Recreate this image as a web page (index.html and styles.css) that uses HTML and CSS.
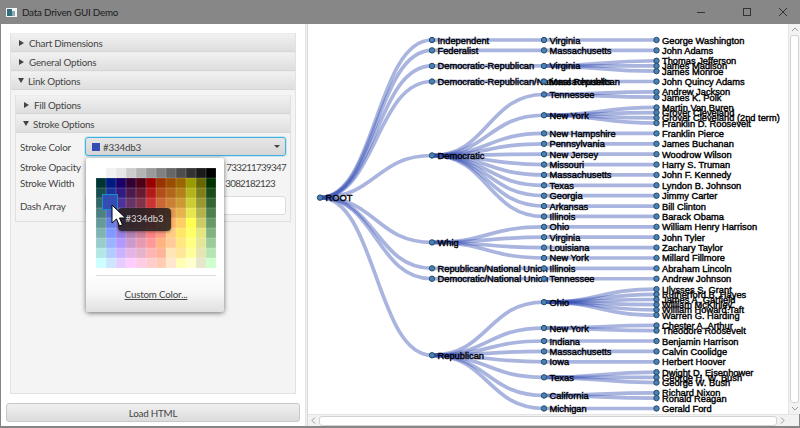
FILE: index.html
```html
<!DOCTYPE html>
<html lang="en">
<head>
  <meta charset="utf-8" />
  <title>Data Driven GUI Demo</title>
  <link rel="stylesheet" href="styles.css">
</head>
<body>
  <div class="window">
    <header class="titlebar">
      <svg class="app-icon" width="11" height="9" viewBox="0 0 11 9">
        <rect width="11" height="9" fill="#f4f4f4"/>
        <rect x="1" y="1" width="5" height="7" fill="#2f6f7d"/>
        <rect x="6" y="3" width="3" height="5" fill="#8fa9b0"/>
      </svg>
      <span class="title">Data Driven GUI Demo</span>
      <svg class="win-btn" width="46" height="24" viewBox="0 0 46 24"><path d="M18 12.500h8" stroke="#333" fill="none"/></svg>
      <svg class="win-btn" width="46" height="24" viewBox="0 0 46 24"><rect x="18.500" y="8.500" width="7" height="7" stroke="#333" fill="none"/></svg>
      <svg class="win-btn" width="29" height="24" viewBox="0 0 29 24"><path d="M8 8l8 8M16 8l-8 8" stroke="#333" fill="none"/></svg>
    </header>

    <div class="main">
      <section class="side">
        <div class="accordion">
          <div class="pane-head"><i class="arrow right"></i>Chart Dimensions</div>
          <div class="pane-head"><i class="arrow right"></i>General Options</div>
          <div class="pane-head"><i class="arrow down"></i>Link Options</div>
          <div class="pane-body">
            <div class="inner">
              <div class="pane-head"><i class="arrow right"></i>Fill Options</div>
              <div class="pane-head"><i class="arrow down"></i>Stroke Options</div>
              <div class="form">
                <div class="row row-combo">
                  <label>Stroke Color</label>
                  <div class="combo"><i class="swatch"></i>#334db3<i class="arrow down combo-arrow"></i></div>
                </div>
                <div class="row"><label>Stroke Opacity</label><span class="value">733211739347</span></div>
                <div class="row"><label>Stroke Width</label><span class="value value-short">3082182123</span></div>
                <div class="row row-input"><label>Dash Array</label><div class="field"></div></div>
              </div>
            </div>
          </div>
        </div>
        <button class="load">Load HTML</button>
      </section>

      <div class="divider"></div>

      <section class="chart">
        <div class="chart-top">
          <svg id="tree" class="tree" width="480" height="391" viewBox="308 24 480 391"></svg>
          <div class="vbar">
            <svg width="12" height="11" viewBox="0 0 12 11"><path d="M3 7l3-3 3 3" stroke="#999" fill="none"/></svg>
            <div class="vthumb"></div>
            <svg width="12" height="11" viewBox="0 0 12 11"><path d="M3 4l3 3 3-3" stroke="#999" fill="none"/></svg>
          </div>
        </div>
        <div class="hbar">
          <svg width="10" height="11" viewBox="0 0 10 11"><path d="M6 2.500l-3 3 3 3" stroke="#999" fill="none"/></svg>
          <div class="hthumb"></div>
          <svg width="10" height="11" viewBox="0 0 10 11"><path d="M4 2.500l3 3-3 3" stroke="#999" fill="none"/></svg>
          <div class="corner"></div>
        </div>
      </section>
    </div>
  </div>

  <!-- colour picker popup -->
  <div class="popup">
    <div id="palette" class="palette"></div>
    <div class="pop-sep"></div>
    <a class="custom">Custom Color...</a>
  </div>
  <div class="picked"></div>
  <div class="tip">#334db3</div>
  <svg class="cursor" width="15" height="24" viewBox="0 0 15 24">
    <path d="M1 1v18l4.500-4 3 7 3-1.300-3-6.700h6z" fill="#fff" stroke="#000" stroke-width="1"/>
  </svg>

  <script src="tree.js"></script>
</body>
</html>
```

FILE: styles.css
```css
* {
  box-sizing: border-box;
}

body {
  margin: 0;
  width: 800px;
  height: 428px;
  overflow: hidden;
  background: #fff;
  color: #444;
  font-family: Lato, sans-serif;
  font-size: 9.8px;
  letter-spacing: -0.2px;
}

.window {
  display: flex;
  flex-direction: column;
  height: 428px;
  border: solid #868686;
  border-width: 0 1px 2px 1px;
}

.titlebar {
  display: flex;
  align-items: center;
  flex: none;
  height: 24px;
  margin: 0 -1px;
  padding-left: 6px;
  background: #878787;
  color: #1c1c1c;
}
.app-icon {
  margin-right: 5px;
}
.title {
  flex: 1;
}

.main {
  display: flex;
  flex: 1;
  min-height: 0;
}

/* left column */
.side {
  display: flex;
  flex-direction: column;
  flex: none;
  width: 304px;
  padding: 9px 5px 4px 5px;
}
.accordion {
  display: flex;
  flex-direction: column;
  flex: 1;
  margin: 0 4px 9px 4px;
  border: 1px solid #e2e2e2;
  border-top: 0;
}
.pane-head {
  display: flex;
  align-items: center;
  flex: none;
  height: 19px;
  padding-left: 7px;
  background: linear-gradient(#f1f1f1, #dedede);
  border-bottom: 1px solid #d6d6d6;
  border-top: 1px solid #ececec;
}
.arrow {
  display: block;
  width: 0;
  height: 0;
}
.arrow.right {
  margin-left: 1px;
  margin-right: 5px;
  border-left: 5px solid #444;
  border-top: 3.500px solid transparent;
  border-bottom: 3.500px solid transparent;
}
.arrow.down {
  margin-right: 4px;
  border-top: 5px solid #444;
  border-left: 3.500px solid transparent;
  border-right: 3.500px solid transparent;
}
.pane-body {
  flex: 1;
  padding: 5px 4px;
  background: #f4f4f4;
}
.inner {
  border: 1px solid #dfdfdf;
  border-top: 0;
}

.form {
  display: flex;
  flex-direction: column;
  height: 88px;
  padding: 4px 4px 0 4px;
}
.row {
  display: flex;
  align-items: center;
  height: 16px;
}
.row label {
  flex: none;
  width: 65px;
  white-space: nowrap;
}
.row-combo {
  height: 19px;
  margin-bottom: 3px;
}
.row-input {
  height: 19px;
  margin-top: 5px;
}
.combo {
  display: flex;
  align-items: center;
  flex: 1;
  height: 19px;
  padding-left: 6px;
  background: linear-gradient(#e6e6e6, #d6d6d6);
  border: 1px solid #3fb2e0;
  border-radius: 3px;
  box-shadow: 0 0 0 1px rgba(120, 200, 235, 0.35);
}
.swatch {
  width: 8px;
  height: 8px;
  margin-right: 3px;
  background: #334db3;
}
.arrow.combo-arrow {
  margin-left: auto;
  margin-right: 5px;
  border-top-width: 3.500px;
  border-left-width: 3px;
  border-right-width: 3px;
}
.value {
  flex: 1;
  letter-spacing: -0.7px;
  text-align: right;
}
.value-short {
  padding-right: 11px;
}
.field {
  flex: 1;
  height: 19px;
  background: #fff;
  border: 1px solid #dcdcdc;
  border-radius: 3px;
}

.load {
  flex: none;
  height: 19px;
  padding: 0;
  color: #444;
  font: inherit;
  letter-spacing: inherit;
  background: linear-gradient(#f0f0f0, #dcdcdc);
  border: 1px solid #c8c8c8;
  border-radius: 3px;
}

.divider {
  flex: none;
  width: 3px;
  background: #f0f0f0;
  border-left: 1px solid #e2e2e2;
  border-right: 1px solid #d8d8d8;
}

/* chart */
.chart {
  display: flex;
  flex-direction: column;
  flex: 1;
  min-width: 0;
}
.chart-top {
  display: flex;
  flex: 1;
  min-height: 0;
}
.tree {
  display: block;
  flex: none;
}
.tree text {
  font-family: "Liberation Sans", sans-serif;
  font-size: 9.3px;
  letter-spacing: 0;
  fill: #000;
  stroke: #000;
  stroke-width: 0.4;
}
.tree .link {
  fill: none;
  stroke: #334db3;
  stroke-width: 3.7;
  stroke-opacity: 0.42;
}
.tree .node {
  fill: #4682b4;
  stroke: #27496b;
  stroke-width: 1;
}
.vbar {
  display: flex;
  flex-direction: column;
  flex: none;
  width: 12px;
  background: #f2f2f2;
  border-left: 1px solid #e4e4e4;
}
.vthumb {
  flex: 1;
  margin: 0 1px;
  background: #fff;
  border: 1px solid #d2d2d2;
  border-radius: 3px;
}
.hbar {
  display: flex;
  align-items: center;
  flex: none;
  height: 12px;
  padding-left: 1px;
  background: #f2f2f2;
  border-top: 1px solid #e4e4e4;
}
.hthumb {
  flex: 1;
  height: 10px;
  background: #fff;
  border: 1px solid #d2d2d2;
  border-radius: 3px;
}
.corner {
  flex: none;
  width: 12px;
}

/* things lying over the form */
.popup {
  position: absolute;
  left: 86px;
  top: 158px;
  display: flex;
  flex-direction: column;
  width: 138px;
  height: 154px;
  padding: 10px 8px 0 10px;
  background: linear-gradient(#fff 75%, #f6f6f6 88%, #e0e0e0);
  border-radius: 3px;
  box-shadow: 0 1px 5px rgba(0, 0, 0, 0.55);
}
.palette {
  display: grid;
  grid-template-columns: repeat(12, 10px);
  grid-auto-rows: 10px;
}
.palette i {
  display: block;
  box-shadow: inset 0 0 0 0.5px rgba(255, 255, 255, 0.2);
}
.pop-sep {
  height: 1px;
  margin-top: 7px;
  background: #dcdcdc;
}
.custom {
  margin-top: 12px;
  color: #444;
  text-align: center;
  text-decoration: underline;
}
.picked {
  position: absolute;
  left: 102px;
  top: 194px;
  width: 16px;
  height: 16px;
  background: #334db3;
  border: 1.500px solid #1590c8;
}
.tip {
  position: absolute;
  left: 118px;
  top: 208px;
  width: 53px;
  height: 23px;
  padding-top: 5px;
  color: #ddd;
  font-size: 9.5px;
  letter-spacing: 0;
  text-align: center;
  background: rgba(38, 30, 30, 0.88);
  border-radius: 4px;
  box-shadow: 0 1px 3px rgba(0, 0, 0, 0.4);
}
.cursor {
  position: absolute;
  left: 111px;
  top: 204px;
}
```

FILE: tree.js
```js
const SVG_NS = "http://www.w3.org/2000/svg";

// party > state > presidents
const data = [
  ["Independent", [["Virginia", ["George Washington"]]]],
  ["Federalist", [["Massachusetts", ["John Adams"]]]],
  ["Democratic-Republican", [["Virginia", ["Thomas Jefferson", "James Madison", "James Monroe"]]]],
  ["Democratic-Republican/National Republican", [["Massachusetts", ["John Quincy Adams"]]]],
  ["Democratic", [
    ["Tennessee", ["Andrew Jackson", "James K. Polk"]],
    ["New York", ["Martin Van Buren", "Grover Cleveland", "Grover Cleveland (2nd term)", "Franklin D. Roosevelt"]],
    ["New Hampshire", ["Franklin Pierce"]],
    ["Pennsylvania", ["James Buchanan"]],
    ["New Jersey", ["Woodrow Wilson"]],
    ["Missouri", ["Harry S. Truman"]],
    ["Massachusetts", ["John F. Kennedy"]],
    ["Texas", ["Lyndon B. Johnson"]],
    ["Georgia", ["Jimmy Carter"]],
    ["Arkansas", ["Bill Clinton"]],
    ["Illinois", ["Barack Obama"]]
  ]],
  ["Whig", [
    ["Ohio", ["William Henry Harrison"]],
    ["Virginia", ["John Tyler"]],
    ["Louisiana", ["Zachary Taylor"]],
    ["New York", ["Millard Fillmore"]]
  ]],
  ["Republican/National Union", [["Illinois", ["Abraham Lincoln"]]]],
  ["Democratic/National Union", [["Tennessee", ["Andrew Johnson"]]]],
  ["Republican", [
    ["Ohio", ["Ulysses S. Grant", "Rutherford B. Hayes", "James A. Garfield", "William McKinley", "William Howard Taft", "Warren G. Harding"]],
    ["New York", ["Chester A. Arthur", "Theodore Roosevelt"]],
    ["Indiana", ["Benjamin Harrison"]],
    ["Massachusetts", ["Calvin Coolidge"]],
    ["Iowa", ["Herbert Hoover"]],
    ["Texas", ["Dwight D. Eisenhower", "George H. W. Bush", "George W. Bush"]],
    ["California", ["Richard Nixon", "Ronald Reagan"]],
    ["Michigan", ["Gerald Ford"]]
  ]]
];

const TOP = 40, STEP = 5.19;
const COLS = [320, 432, 544, 656.5];

// Leaves first, a parent sits halfway between its first and last child
let cursor = TOP - 2 * STEP;
const nodes = [], links = [];

function place(name, kids, depth) {
  const node = { name, x: COLS[depth] };
  if (depth === 3) {
    return node;
  }
  const children = kids.map(k => {
    if (depth === 2) {
      const leaf = place(k, null, 3);
      cursor += STEP;
      leaf.y = cursor;
      return leaf;
    }
    if (depth === 1) {
      cursor += STEP; // extra space between states
    }
    return place(k[0], k[1], depth + 1);
  });
  node.y = (children[0].y + children[children.length - 1].y) / 2;
  children.forEach(c => links.push([node, c]));
  node.kids = children;
  return node;
}

const root = place("ROOT", data, 0);

function collect(n) {
  nodes.push(n);
  (n.kids || []).forEach(collect);
}
collect(root);

const svg = document.getElementById("tree");

function add(tag, attrs, text) {
  const el = document.createElementNS(SVG_NS, tag);
  Object.keys(attrs).forEach(k => el.setAttribute(k, attrs[k]));
  if (text) el.textContent = text;
  svg.appendChild(el);
}

links.forEach(([s, t]) => {
  const m = (s.x + t.x) / 2;
  add("path", { class: "link", d: `M${s.x},${s.y}C${m},${s.y} ${m},${t.y} ${t.x},${t.y}` });
});
nodes.forEach(n => {
  add("circle", { class: "node", cx: n.x, cy: n.y, r: 2.7 });
  add("text", { x: n.x + 5.5, y: n.y + 3.5 }, n.name);
});

// JavaFX colour palette, one row per line
const palette = [
  "255,255,255 242,242,242 230,230,230 204,204,204 179,179,179 153,153,153 128,128,128 102,102,102 77,77,77 51,51,51 26,26,26 0,0,0",
  "0,51,51 0,26,128 26,0,104 51,0,51 77,0,26 153,0,0 153,51,0 153,77,0 153,102,0 153,153,0 102,102,0 0,51,0",
  "26,77,77 26,51,153 51,26,128 77,26,77 102,26,51 179,26,26 179,77,26 179,102,26 179,128,26 179,179,26 128,128,26 26,77,26",
  "51,102,102 51,77,179 77,51,153 102,51,102 128,51,77 204,51,51 204,102,51 204,128,51 204,153,51 204,204,51 153,153,51 51,102,51",
  "77,128,128 77,102,204 102,77,179 128,77,128 153,77,102 230,77,77 230,128,77 230,153,77 230,179,77 230,230,77 179,179,77 77,128,77",
  "102,153,153 102,128,230 128,102,204 153,102,153 179,102,128 255,102,102 255,153,102 255,179,102 255,204,102 255,255,77 204,204,102 102,153,102",
  "128,179,179 128,153,255 153,128,230 179,128,179 204,128,153 255,128,128 255,153,128 255,204,128 255,230,102 255,255,102 230,230,128 128,179,128",
  "153,204,204 153,179,255 179,153,255 204,153,204 230,153,179 255,153,153 255,179,128 255,204,153 255,230,128 255,255,128 230,230,153 153,204,153",
  "179,230,230 179,204,255 204,179,255 230,179,230 230,179,204 255,179,179 255,179,153 255,230,179 255,230,153 255,255,153 230,230,179 179,230,179",
  "204,255,255 204,230,255 230,204,255 255,204,255 255,204,230 255,204,204 255,204,179 255,230,204 255,255,179 255,255,204 230,230,204 204,255,204"
];

const paletteBox = document.getElementById("palette");
palette.join(" ").split(" ").forEach(c => {
  const cell = document.createElement("i");
  cell.style.background = `rgb(${c})`;
  paletteBox.appendChild(cell);
});
```
